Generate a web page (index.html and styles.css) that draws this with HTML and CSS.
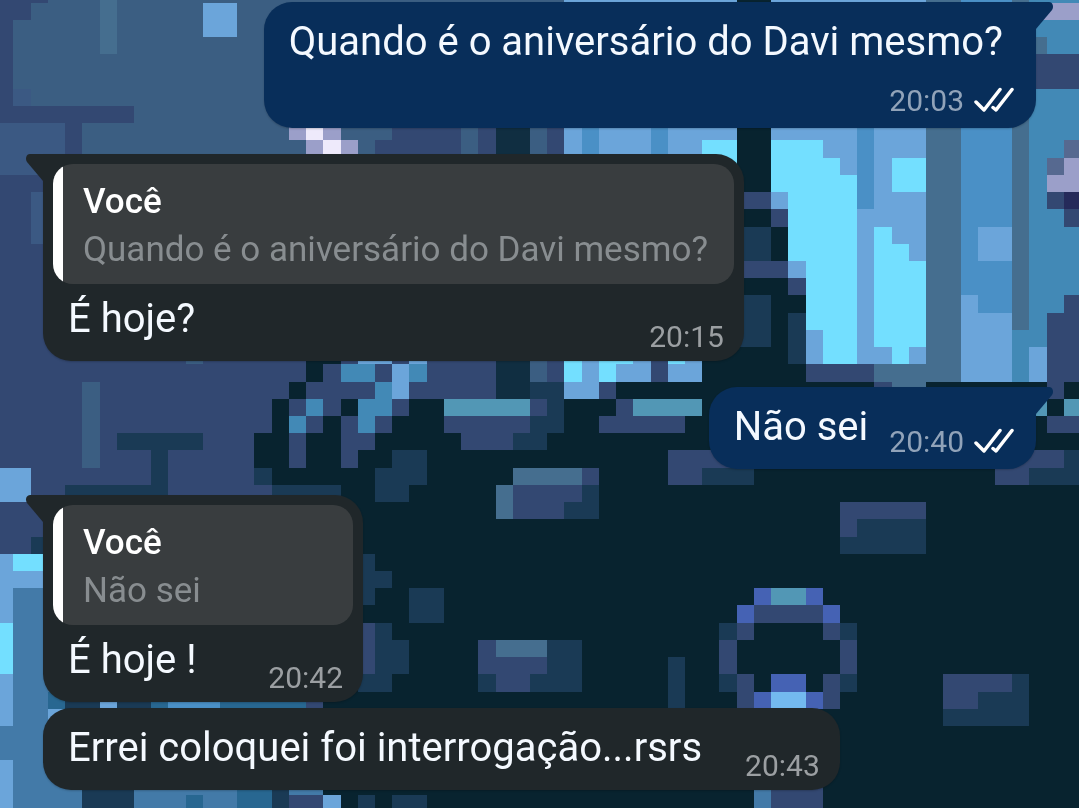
FILE: index.html
```html
<!DOCTYPE html>
<html lang="pt-BR">
<head>
<meta charset="utf-8">
<meta name="viewport" content="width=device-width, initial-scale=1">
<title>Conversa</title>
<link rel="stylesheet" href="styles.css">
</head>
<body>
<!-- Pixel-art wallpaper: one unit is one art pixel -->
<svg class="wallpaper" viewBox="0.22 0.843 62.66 46.92" preserveAspectRatio="xMidYMid slice" aria-hidden="true">
<path class="steel" d="M0 0h33v11h-33z"/>
<path class="denim" d="M0 8h4v3h-4zM5 10h12v1h-12zM1 6h1v1h-1z"/>
<path class="navy" d="M0 0h3v1h-3zM0 1h2v1h-2zM0 2h1v5h-1zM0 7h8v1h-8zM4 8h1v3h-1zM0 11h20v19h-20zM0 30h3v3h-3zM22 8h10v16h-10zM20 11h3v17h-3z"/>
<path class="denim" d="M2 12h1v3h-1z"/>
<path class="slate" d="M6 0h1v4h-1z"/>
<path class="sky" d="M12 1h2v2h-2z"/>
<path class="lilac" d="M17 8h3v1h-3zM18 9h3v1h-3z"/>
<path class="white" d="M18 8h1v1h-1zM19 9h1v1h-1z"/>
<path class="steel" d="M20 8h3v1h-3zM21 9h1v1h-1zM27 8h1v3h-1zM31 8h1v15h-1zM5 23h1v5h-1zM11 21h1v1h-1z"/>
<path class="ink" d="M29 8h2v16h-2z"/>
<path class="navy" d="M32 8h1v15h-1z"/>
<!-- Waterfall and window light -->
<path class="sky" d="M33 0h21v11h-21zM45 8h9v14h-9z"/>
<path class="blue" d="M34 8h1v3h-1zM38 8h1v3h-1zM50 8h1v5h-1zM56 0h3v23h-3z"/>
<path class="slate" d="M54 0h2v23h-2zM59 0h1v20h-1z"/>
<path class="azure" d="M60 0h3v24h-3zM59 20h1v3h-1z"/>
<path class="night" d="M43 0h2v12h-2zM43 13h2v1h-2zM43 17h3v6h-3zM46 18h1v6h-1zM45 14h1v2h-1z"/>
<path class="cyan" d="M41 9h2v2h-2zM45 9h3v1h-3zM45 10h4v1h-4zM45 11h5v1h-5zM46 12h4v4h-4zM47 16h3v4h-3zM48 20h2v2h-2zM52 10h2v2h-2zM51 14h1v1h-1zM51 15h2v1h-2zM51 16h3v5h-3zM52 21h1v1h-1z"/>
<path class="navy" d="M42 12h3v1h-3zM45 13h1v1h-1zM42 16h4v1h-4zM46 17h1v1h-1zM47 22h4v1h-4z"/>
<path class="deep" d="M42 14h3v2h-3zM42 18h3v3h-3zM46 19h1v3h-1z"/>
<path class="slate" d="M51 22h3v1h-3zM52 23h2v1h-2z"/>
<path class="sky" d="M57 14h2v2h-2zM56 18h1v1h-1zM56 19h3v4h-3zM60 21h1v2h-1z"/>
<path class="lilac" d="M58 1h5v1h-5zM62 10h1v1h-1zM61 11h2v1h-2z"/>
<path class="slate" d="M60 3h1v1h-1z"/>
<path class="dusk" d="M62 9h1v1h-1zM61 10h1v1h-1z"/>
<path class="navy" d="M60 4h3v2h-3zM61 12h1v1h-1zM62 13h1v1h-1zM62 18h1v1h-1zM61 19h2v4h-2z"/>
<path class="indigo" d="M62 12h1v1h-1z"/>
<!-- Roots and leaves -->
<path class="night" d="M18 21h1v2h-1zM19 21h1v1h-1zM17 23h1v1h-1zM16 24h1v5h-1zM20 24h1v1h-1zM19 25h1v4h-1zM15 26h1v2h-1zM18 26h1v3h-1zM17 28h5v1h-5zM20 29h3v1h-3zM21 27h3v3h-3zM22 26h5v3h-5zM24 24h9v3h-9zM23 25h1v2h-1zM33 24h30v3h-30zM36 23h15v1h-15zM54 23h7v1h-7z"/>
<path class="azure" d="M20 22h2v1h-2zM21 21h1v1h-1zM18 24h1v1h-1zM17 25h1v1h-1zM24 22h1v1h-1zM22 23h1v1h-1zM21 24h2v1h-2zM21 25h1v1h-1z"/>
<path class="sky" d="M23 22h1v2h-1zM21 21h2v1h-2zM24 21h1v1h-1zM33 21h8v2h-8zM33 23h2v1h-2z"/>
<path class="cyan" d="M33 21h1v2h-1zM35 21h1v2h-1zM36 21h1v1h-1zM39 21h1v1h-1z"/>
<path class="navy" d="M38 21h1v2h-1zM35 23h1v1h-1zM23 24h1v1h-1zM31 24h1v1h-1zM36 24h1v1h-1zM26 25h5v1h-5zM35 25h5v1h-5zM21 26h1v1h-1zM27 26h3v1h-3zM61 23h1v1h-1zM61 25h2v1h-2zM51 23h1v1h-1z"/>
<path class="night" d="M62 23h1v1h-1z"/>
<path class="deep" d="M31 23h2v1h-2zM32 24h1v1h-1zM31 25h2v1h-2zM30 26h2v1h-2zM7 26h5v1h-5zM9 27h1v2h-1zM4 29h6v1h-6zM15 28h1v1h-1zM16 29h4v1h-4zM2 32h1v1h-1z"/>
<path class="teal" d="M26 24h5v1h-5zM37 24h4v1h-4zM60 24h1v1h-1zM62 24h1v1h-1z"/>
<path class="sky" d="M0 28h2v2h-2z"/>
<!-- Stones -->
<path class="deep" d="M23 27h2v2h-2zM22 28h2v2h-2zM41 28h3v1h-3zM34 29h1v2h-1zM33 30h1v1h-1zM60 28h3v1h-3zM62 27h1v1h-1zM50 31h4v1h-4zM49 32h5v1h-5zM21 33h1v3h-1zM22 34h1v1h-1zM24 35h2v2h-2zM21 37h2v4h-2zM23 38h1v2h-1zM32 38h2v3h-2zM28 40h4v1h-4zM39 39h1v3h-1zM59 40h1v3h-1zM57 41h2v2h-2zM55 42h2v1h-2zM21 47h1v1h-1zM23 47h2v1h-2z"/>
<path class="navy" d="M39 27h4v1h-4zM39 28h2v1h-2zM34 28h1v1h-1zM30 29h4v1h-4zM30 30h3v1h-3zM59 27h3v1h-3zM58 28h2v1h-2zM49 30h5v1h-5zM49 31h1v1h-1zM21 37h1v3h-1zM28 38h1v2h-1zM29 39h3v1h-3zM29 40h2v1h-2zM55 40h4v1h-4zM55 41h2v1h-2z"/>
<path class="slate" d="M30 28h4v1h-4zM29 29h1v2h-1zM29 38h3v1h-3z"/>
<!-- Ring -->
<path class="deep" d="M42 37h1v1h-1zM49 37h1v1h-1zM42 40h1v1h-1zM49 40h1v1h-1z"/>
<path class="navy" d="M44 36h4v1h-4zM43 37h1v1h-1zM48 37h1v1h-1zM42 38h1v2h-1zM49 38h1v2h-1zM43 40h1v2h-1zM48 40h1v2h-1zM45 45h3v3h-3z"/>
<path class="royal" d="M44 35h1v1h-1zM47 35h1v1h-1zM43 36h1v1h-1zM48 36h1v1h-1zM45 40h2v1h-2zM44 41h1v1h-1zM47 41h1v1h-1z"/>
<path class="teal" d="M45 35h2v1h-2z"/>
<path class="ice" d="M45 41h2v1h-2z"/>
<path class="water" d="M44 45h1v3h-1z"/>
<!-- Pool -->
<path class="water" d="M0 33h5v15h-5zM8 45h8v3h-8zM17 46h2v1h-2z"/>
<path class="sky" d="M0 33h1v4h-1zM1 34h2v1h-2zM0 40h1v3h-1zM0 45h1v3h-1zM3 42h1v1h-1zM19 47h1v1h-1z"/>
<path class="cyan" d="M1 33h2v1h-2zM0 37h1v3h-1z"/>
<path class="deep" d="M4 41h5v1h-5zM5 45h3v3h-3zM16 45h1v3h-1z"/>
<path class="lagoon" d="M3 41h1v1h-1zM9 41h1v1h-1zM13 41h5v1h-5zM11 47h1v1h-1zM14 46h2v2h-2z"/>
<path class="sky" d="M6 41h1v1h-1z"/>
<path class="blue" d="M10 41h3v1h-3z"/>
<path class="navy" d="M18 41h1v1h-1zM17 47h2v1h-2z"/>
</svg>

<main class="chat">
  <article class="bubble sent stacked tailed">
    <svg class="tail" viewBox="0 0 20 28" aria-hidden="true"><path d="M0 0H15C19 0 20 5 18 8L2 27H0z"/></svg>
    <p class="text">Quando é o aniversário do Davi mesmo?</p>
    <footer class="meta"><time>20:03</time><svg class="ticks" viewBox="0 0 40 26" role="img" aria-label="Entregue"><path d="M2 15l8 8L26 2.500M19 20.500l3 2.500L38 2.500"/></svg></footer>
  </article>

  <article class="bubble received tailed">
    <svg class="tail" viewBox="0 0 20 28" aria-hidden="true"><path d="M20 0H5C1 0 0 5 2 8L18 27H20z"/></svg>
    <blockquote class="quote"><strong class="author">Você</strong><p class="quoted">Quando é o aniversário do Davi mesmo?</p></blockquote>
    <div class="line"><p class="text">É hoje?</p><footer class="meta"><time>20:15</time></footer></div>
  </article>

  <article class="bubble sent tailed">
    <svg class="tail" viewBox="0 0 20 28" aria-hidden="true"><path d="M0 0H15C19 0 20 5 18 8L2 27H0z"/></svg>
    <div class="line"><p class="text">Não sei</p><footer class="meta"><time>20:40</time><svg class="ticks" viewBox="0 0 40 26" role="img" aria-label="Entregue"><path d="M2 15l8 8L26 2.500M19 20.500l3 2.500L38 2.500"/></svg></footer></div>
  </article>

  <article class="bubble received tailed">
    <svg class="tail" viewBox="0 0 20 28" aria-hidden="true"><path d="M20 0H5C1 0 0 5 2 8L18 27H20z"/></svg>
    <blockquote class="quote"><strong class="author">Você</strong><p class="quoted">Não sei</p></blockquote>
    <div class="line"><p class="text">É hoje !</p><footer class="meta"><time>20:42</time></footer></div>
  </article>

  <article class="bubble received grouped">
    <div class="line"><p class="text">Errei coloquei foi interrogação...rsrs</p><footer class="meta"><time>20:43</time></footer></div>
  </article>
</main>
</body>
</html>
```
FILE: styles.css
```css
* { box-sizing: border-box; }

body {
  margin: 0;
  background: #08232f;
  color: #f4f9ff;
  font-family: Roboto, "Liberation Sans", sans-serif;
}

.wallpaper {
  position: fixed;
  inset: 0;
  width: 100%;
  height: 100%;
  shape-rendering: crispEdges;
}
.steel { fill: #3b5e82; }
.denim { fill: #3b5983; }
.navy { fill: #334872; }
.slate { fill: #456e8f; }
.sky { fill: #6ba5da; }
.lilac { fill: #9b9fc9; }
.white { fill: #eeeafb; }
.ink { fill: #102e41; }
.night { fill: #08232f; }
.blue { fill: #4a90c6; }
.azure { fill: #4289b6; }
.cyan { fill: #73dfff; }
.deep { fill: #1a3a55; }
.dusk { fill: #566990; }
.indigo { fill: #252a5a; }
.teal { fill: #5297b5; }
.royal { fill: #4562b4; }
.ice { fill: #73b9ef; }
.water { fill: #437aa8; }
.lagoon { fill: #286791; }

.chat {
  position: relative;
  display: flex;
  flex-direction: column;
  gap: 26px;
  padding: 2px 43px 18px;
}

.bubble {
  position: relative;
  max-width: 90%;
  border-radius: 28px;
  box-shadow: 0 1px 2px rgba(0, 0, 0, 0.2);
}
.sent {
  align-self: flex-end;
  background: #082e5a;
  --bubble: #082e5a;
}
.received {
  align-self: flex-start;
  background: #20272a;
  --bubble: #20272a;
}
.sent.tailed { border-top-right-radius: 0; }
.received.tailed { border-top-left-radius: 0; }
.grouped { margin-top: -20px; }

.tail {
  position: absolute;
  top: 0;
  width: 20px;
  height: 28px;
  fill: var(--bubble);
}
.sent .tail { left: calc(100% - 2px); }
.received .tail { right: calc(100% - 2px); }

.text {
  margin: 0;
  padding: 16px 0 18px 25px;
  font-size: 40px;
  line-height: 48px;
}
.stacked .text { padding: 16px 33px 0 25px; }
.stacked .meta { justify-content: flex-end; padding-top: 17px; }

.line {
  display: flex;
  align-items: flex-end;
  justify-content: space-between;
  gap: 43px;
}
.sent .line { gap: 21px; }
.quote + .line .text { padding-top: 11px; }

.meta {
  display: flex;
  align-items: center;
  gap: 10px;
  padding: 0 20px 6px 0;
  color: #9b9fa2;
  font-size: 30px;
  line-height: 36px;
}
.sent .meta {
  padding-right: 22px;
  padding-bottom: 9px;
  color: #91a3b9;
}

.ticks {
  width: 40px;
  height: 26px;
  margin-bottom: 2px;
  fill: none;
  stroke: #fff;
  stroke-width: 3.5;
  stroke-linecap: round;
  stroke-linejoin: round;
}

.quote {
  min-width: 300px;
  margin: 10px 10px 0;
  padding: 14px 26px 10px 30px;
  border-radius: 20px;
  background: linear-gradient(to right, #fff 10px, #393d3f 10px);
  font-size: 35px;
  line-height: 48px;
}
.author {
  display: block;
  color: #fff;
  font-weight: 500;
}
.quoted {
  margin: 0;
  color: #888d90;
}
```
